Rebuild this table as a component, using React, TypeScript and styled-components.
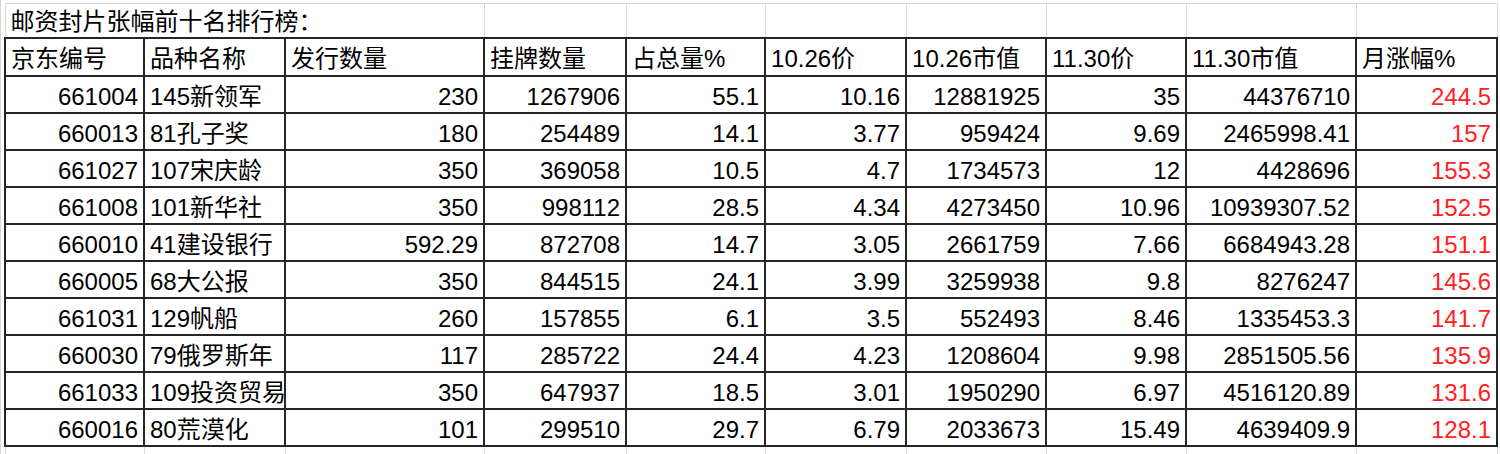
import React from 'react';
import styled, { createGlobalStyle } from 'styled-components';

const GlobalStyle = createGlobalStyle`
  html, body {
    margin: 0;
    padding: 0;
    background: #ffffff;
  }
  body {
    font-family: "Liberation Sans", "Noto Sans CJK SC", sans-serif;
    color: #000;
  }
`;

const Page = styled.div`
  width: 1500px;
  height: 454px;
  overflow: hidden;
  padding: 3px 0 0 3px;
  box-sizing: border-box;
  background: #fff;
  border-left: 1px solid #d6d6d6;
`;

const Sheet = styled.table`
  border-collapse: collapse;
  table-layout: fixed;
  width: 1492px;
  font-size: 24px;
  line-height: 1;
`;

const TitleCell = styled.td`
  height: 31px;
  padding: 2px 5px 0;
  border-top: 1px solid #d9d9d9;
  border-left: 1px solid #d9d9d9;
  white-space: nowrap;
  vertical-align: middle;
`;

const GridCell = styled.td`
  border: 1px solid #d9d9d9;
  border-bottom: none;
`;

const HeadCell = styled.td`
  height: 32px;
  padding: 4px 5px 0;
  border: 2px solid #262626;
  white-space: nowrap;
  overflow: hidden;
  vertical-align: middle;
`;

const DataCell = styled.td<{ $align?: 'left' | 'right'; $red?: boolean }>`
  height: 31px;
  padding: 4px 5px 0;
  border: 2px solid #262626;
  white-space: nowrap;
  overflow: hidden;
  vertical-align: middle;
  text-align: ${p => (p.$align === 'left' ? 'left' : 'right')};
  color: ${p => (p.$red ? '#ff1f1f' : '#000')};
`;

const TailCell = styled.td`
  height: 10px;
  border-left: 1px solid #d9d9d9;
  border-right: 1px solid #d9d9d9;
`;

const widths = [139, 141, 199, 142, 139, 141, 140, 140, 170, 141];

const headers = ['京东编号', '品种名称', '发行数量', '挂牌数量', '占总量%', '10.26价', '10.26市值', '11.30价', '11.30市值', '月涨幅%'];

const rows: string[][] = [
  ['661004', '145新领军', '230', '1267906', '55.1', '10.16', '12881925', '35', '44376710', '244.5'],
  ['660013', '81孔子奖', '180', '254489', '14.1', '3.77', '959424', '9.69', '2465998.41', '157'],
  ['661027', '107宋庆龄', '350', '369058', '10.5', '4.7', '1734573', '12', '4428696', '155.3'],
  ['661008', '101新华社', '350', '998112', '28.5', '4.34', '4273450', '10.96', '10939307.52', '152.5'],
  ['660010', '41建设银行', '592.29', '872708', '14.7', '3.05', '2661759', '7.66', '6684943.28', '151.1'],
  ['660005', '68大公报', '350', '844515', '24.1', '3.99', '3259938', '9.8', '8276247', '145.6'],
  ['661031', '129帆船', '260', '157855', '6.1', '3.5', '552493', '8.46', '1335453.3', '141.7'],
  ['660030', '79俄罗斯年', '117', '285722', '24.4', '4.23', '1208604', '9.98', '2851505.56', '135.9'],
  ['661033', '109投资贸易', '350', '647937', '18.5', '3.01', '1950290', '6.97', '4516120.89', '131.6'],
  ['660016', '80荒漠化', '101', '299510', '29.7', '6.79', '2033673', '15.49', '4639409.9', '128.1'],
];

export default function App() {
  return (
    <>
      <GlobalStyle />
      <Page>
        <Sheet>
          <colgroup>
            {widths.map((w, i) => (
              <col key={i} style={{ width: w }} />
            ))}
          </colgroup>
          <tbody>
            <tr>
              <TitleCell colSpan={3}>邮资封片张幅前十名排行榜：</TitleCell>
              {widths.slice(3).map((_, i) => (
                <GridCell key={i} />
              ))}
            </tr>
            <tr>
              {headers.map(h => (
                <HeadCell key={h}>{h}</HeadCell>
              ))}
            </tr>
            {rows.map(r => (
              <tr key={r[0]}>
                {r.map((v, i) => (
                  <DataCell key={i} $align={i === 1 ? 'left' : 'right'} $red={i === 9}>
                    {v}
                  </DataCell>
                ))}
              </tr>
            ))}
            <tr>
              {widths.map((_, i) => (
                <TailCell key={i} />
              ))}
            </tr>
          </tbody>
        </Sheet>
      </Page>
    </>
  );
}
